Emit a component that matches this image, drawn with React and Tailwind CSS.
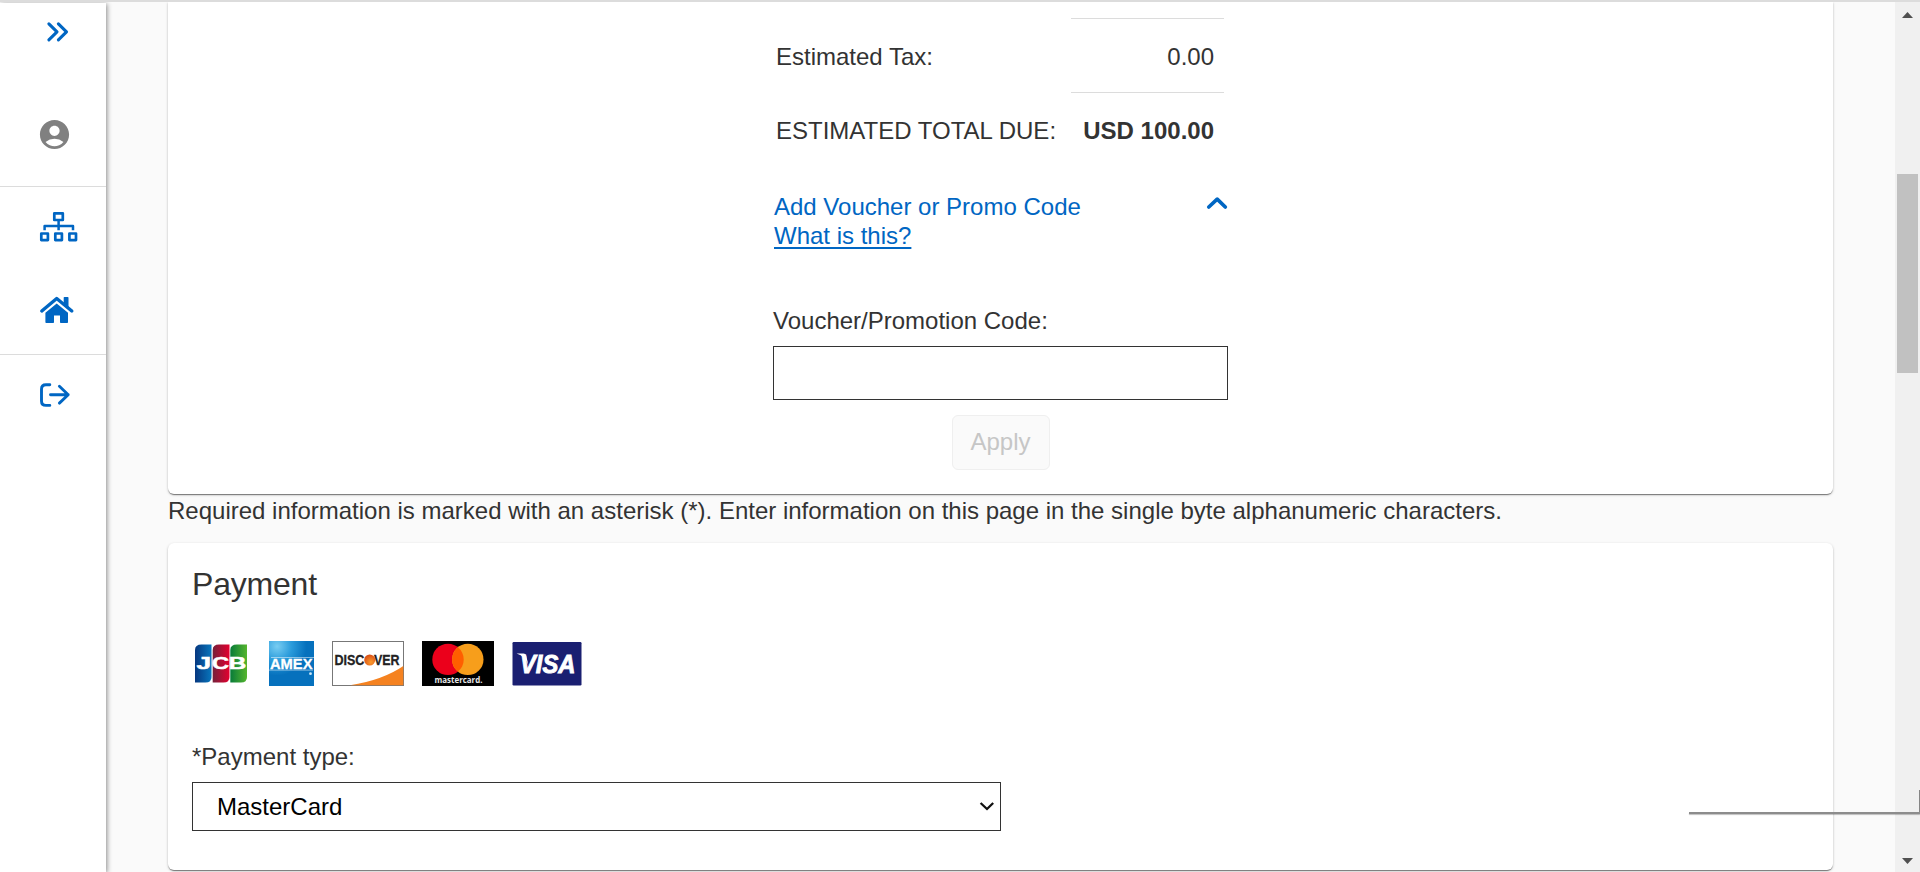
import React from "react";
import { MdAccountCircle } from "react-icons/md";

function Sidebar() {
  return (
    <nav className="mt-[3px] flex h-[869px] w-[106px] shrink-0 flex-col bg-white shadow-[1px_1px_5px_rgba(0,0,0,0.45)]">
      <div className="flex h-[184px] flex-col border-b border-[#dcdcdc]">
        <svg className="mt-[18px] ml-[46px] shrink-0" width="24" height="22" viewBox="0 0 24 22" fill="none" stroke="#0066c3" strokeWidth="3.1" strokeLinecap="round" strokeLinejoin="round">
          <path d="M2.9 2.9L11 10.9L2.9 18.8M12.4 2.9L20.5 10.9L12.4 18.8" />
        </svg>
        <MdAccountCircle className="mt-[74px] ml-[37px] size-[35px] shrink-0 text-[#808080]" />
      </div>
      <div className="flex h-[168px] flex-col border-b border-[#dcdcdc] pl-[39px]">
        <svg className="mt-[22px] shrink-0" width="40" height="34" viewBox="0 0 40 34" fill="none" stroke="#0066c3" strokeWidth="2.7" strokeLinejoin="round" strokeLinecap="round">
          <rect x="15.3" y="4.3" width="8.5" height="6.7" />
          <path d="M19.6 11.5V21.2M5.6 21.2V17H34V21.2" strokeWidth="2.5" strokeLinecap="butt" />
          <rect x="2.3" y="24.5" width="6.6" height="6.6" />
          <rect x="16.3" y="24.5" width="6.6" height="6.6" />
          <rect x="30.4" y="24.5" width="6.6" height="6.6" />
        </svg>
        <svg className="mt-[50px] shrink-0" width="38" height="32" viewBox="0 0 38 32" fill="#0066c3">
          <path d="M2.8 18L17.7 5.5L32.8 18" fill="none" stroke="#0066c3" strokeWidth="3.4" strokeLinecap="round" strokeLinejoin="round" />
          <path d="M24.7 4.7Q24.7 4 25.4 4H28.8Q29.5 4 29.5 4.7V15L24.7 11Z" />
          <path d="M17.7 10.5L29 19.7V29.2Q29 30 28.2 30H21.8Q21 30 21 29.2V22.5H15V29.2Q15 30 14.2 30H7.2Q6.4 30 6.4 29.2V19.7Z" />
        </svg>
      </div>
      <svg className="mt-[26px] ml-[39px] shrink-0" width="34" height="28" viewBox="0 0 34 28" fill="none" stroke="#0066c3" strokeWidth="2.9" strokeLinecap="round" strokeLinejoin="round">
        <path d="M10.8 3.7H7Q2.5 3.7 2.5 8.2V19.9Q2.5 24.4 7 24.4H10.8M11.5 13.7H29.2M20.4 5.3L29.2 13.7L20.4 22.1" />
      </svg>
    </nav>
  );
}

function CardLogos() {
  return (
    <div className="mt-[38px] flex h-[45px] items-start gap-[18px]">
      <svg width="59" height="45" viewBox="0 0 59 45" fontFamily="Liberation Sans, sans-serif">
        <defs>
          <linearGradient id="jb"><stop stopColor="#06377f" /><stop offset="1" stopColor="#0876bd" /></linearGradient>
          <linearGradient id="jr"><stop stopColor="#75203a" /><stop offset="1" stopColor="#e4002f" /></linearGradient>
          <linearGradient id="jg"><stop stopColor="#087b39" /><stop offset="1" stopColor="#55b52e" /></linearGradient>
        </defs>
        <path d="M9.5 3.5H19.5V36Q19.5 41.5 13.5 41.5H3V9Q3 3.5 9.5 3.5Z" fill="url(#jb)" />
        <path d="M27 3.5H37.5V36Q37.5 41.5 31.5 41.5H20.7V9Q20.7 3.5 27 3.5Z" fill="url(#jr)" />
        <path d="M45 3.5H55V36Q55 41.5 49 41.5H38.3V9Q38.3 3.5 45 3.5Z" fill="url(#jg)" />
        <g fill="#fff" stroke="#fff" strokeWidth=".5" fontSize="16" fontWeight="700">
          <text x="4.5" y="28.4" textLength="14.5" lengthAdjust="spacingAndGlyphs">J</text>
          <text x="20" y="28.4" textLength="17" lengthAdjust="spacingAndGlyphs">C</text>
          <text x="36.8" y="28.4" textLength="17.5" lengthAdjust="spacingAndGlyphs">B</text>
        </g>
      </svg>
      <svg width="45" height="45" viewBox="0 0 45 45" fontFamily="Liberation Sans, sans-serif">
        <defs>
          <radialGradient id="ax" cx="0.18" cy="0.12" r="0.65"><stop stopColor="#78cdf2" /><stop offset="0.5" stopColor="#2a9bdb" /><stop offset="1" stopColor="#0671bd" /></radialGradient>
        </defs>
        <rect width="45" height="45" fill="url(#ax)" />
        <rect x="2" y="16" width="43" height="1" fill="#fff" opacity=".5" />
        <rect x="0" y="28.6" width="44" height="1" fill="#fff" opacity=".5" />
        <text x="1" y="27.9" fill="#fff" stroke="#fff" strokeWidth=".3" fontSize="14.5" fontWeight="700" textLength="42.5" lengthAdjust="spacingAndGlyphs">AMEX</text>
        <circle cx="41.5" cy="32.7" r="1.4" fill="#cce7f8" />
      </svg>
      <svg width="72" height="45" viewBox="0 0 72 45" fontFamily="Liberation Sans, sans-serif">
        <defs>
          <radialGradient id="dc" cx="0.6" cy="0.7" r="0.7"><stop stopColor="#fb9b2c" /><stop offset="1" stopColor="#d84d16" /></radialGradient>
        </defs>
        <rect x=".5" y=".5" width="71" height="44" fill="#fff" stroke="#777" />
        <path d="M71.3 25Q51 39 18 44.3H71.3Z" fill="#f58220" />
        <text x="2.4" y="24.2" fill="#222" stroke="#222" strokeWidth=".3" fontSize="15.5" fontWeight="700" textLength="30" lengthAdjust="spacingAndGlyphs">DISC</text>
        <circle cx="37.7" cy="19" r="5.5" fill="url(#dc)" />
        <text x="42" y="24.2" fill="#222" stroke="#222" strokeWidth=".3" fontSize="15.5" fontWeight="700" textLength="25.6" lengthAdjust="spacingAndGlyphs">VER</text>
      </svg>
      <svg width="72" height="45" viewBox="0 0 72 45" fontFamily="Open Sans, sans-serif">
        <rect width="72" height="45" fill="#000" />
        <circle cx="26" cy="18.4" r="15.7" fill="#eb001b" />
        <circle cx="45.8" cy="18.4" r="15.7" fill="#f79e1b" />
        <path d="M35.9 6.2A15.7 15.7 0 0 1 35.9 30.6A15.7 15.7 0 0 1 35.9 6.2Z" fill="#ff5f00" />
        <text x="12.5" y="41.6" fill="#e8e8e8" fontSize="8.5" fontWeight="700" textLength="48" lengthAdjust="spacingAndGlyphs">mastercard.</text>
      </svg>
      <svg width="70" height="45" viewBox="0 0 70 45" fontFamily="Liberation Sans, sans-serif">
        <rect x=".5" y="1" width="69" height="43.5" rx="1.2" fill="#1a1f71" />
        <path d="M4.6 12.6H11.5Q13.6 12.6 14.2 14.7L16.4 24Q13.5 15.6 4.6 12.6Z" fill="#fff" />
        <text x="8" y="31.6" fill="#fff" stroke="#fff" strokeWidth=".9" fontSize="26" fontWeight="700" fontStyle="italic" textLength="55.5" lengthAdjust="spacingAndGlyphs">VISA</text>
      </svg>
    </div>
  );
}

function OrderSummary() {
  return (
    <section className="flex h-[492px] flex-col rounded-b-[6px] bg-white pl-[605px] shadow-[0_1px_3px_rgba(0,0,0,0.2),0_2px_1px_-1px_rgba(0,0,0,0.3),0_1px_1px_rgba(0,0,0,0.2)]">
      <div className="mt-4 grid w-[451px] grid-cols-[298px_153px]">
        <div className="h-[74px] pt-[25px] pl-[3px]">Estimated Tax:</div>
        <div className="border-t border-[#dcdcdc] pt-[24px] pr-[10px] text-right">0.00</div>
        <div className="h-[74px] pt-[25px] pl-[3px] whitespace-nowrap">ESTIMATED TOTAL DUE:</div>
        <div className="border-t border-[#dcdcdc] pt-[24px] pr-[10px] text-right font-bold whitespace-nowrap">USD 100.00</div>
      </div>
      <div className="mt-[26px] flex w-[455px] justify-between pl-[1px] leading-[29px] text-[#0066c3]">
        <div>
          <div>Add Voucher or Promo Code</div>
          <a className="underline decoration-2 underline-offset-[3px]">What is this?</a>
        </div>
        <svg className="mt-[3px]" width="22" height="16" viewBox="0 0 22 16" fill="none" stroke="#0066c3" strokeWidth="3.7" strokeLinecap="round" strokeLinejoin="round">
          <path d="M2.8 12L11.2 4.2L19.3 12" />
        </svg>
      </div>
      <label className="mt-[57px]">Voucher/Promotion Code:</label>
      <input className="mt-[11px] h-[54px] w-[455px] shrink-0 border border-[#333]" />
      <div className="mt-[15px] flex w-[455px] justify-center">
        <button className="h-[55px] w-[98px] rounded-[6px] border border-[#efefef] bg-[#fafafa] pb-[2px] text-[#c6c6c6]">Apply</button>
      </div>
    </section>
  );
}

function Payment() {
  return (
    <section className="mt-[19px] flex h-[327px] flex-col rounded-[6px] bg-white pl-6 shadow-[0_1px_3px_rgba(0,0,0,0.2),0_2px_1px_-1px_rgba(0,0,0,0.3),0_1px_1px_rgba(0,0,0,0.2)]">
      <h2 className="mt-[22px] text-[32px] leading-[38px] tracking-[-0.2px]">Payment</h2>
      <CardLogos />
      <label className="mt-[57px]">*Payment type:</label>
      <div className="mt-[11px] flex h-[49px] w-[809px] items-center justify-between border border-[#333] pr-[6px] pl-6 text-black">
        <span>MasterCard</span>
        <svg width="15" height="14" viewBox="0 0 15 14" fill="none" stroke="#111" strokeWidth="2.3">
          <path d="M1.6 3L8 9L14.2 3" />
        </svg>
      </div>
    </section>
  );
}

function Scrollbar() {
  return (
    <div className="mt-[2px] flex h-[870px] w-[25px] shrink-0 flex-col items-center bg-[#f0f0f0]">
      <svg className="mt-[10px]" width="11" height="6" viewBox="0 0 11 6"><path d="M0 6L5.5 0L11 6Z" fill="#505050" /></svg>
      <div className="mt-[156px] h-[199px] w-[21px] bg-[#c1c1c1]" />
      <svg className="mt-auto mb-[8px]" width="11" height="6" viewBox="0 0 11 6"><path d="M0 0H11L5.5 6Z" fill="#505050" /></svg>
    </div>
  );
}

export default function App() {
  return (
    <div className="relative h-[872px] w-[1920px] overflow-hidden bg-[#fafafa] font-['Liberation_Sans',Arial,sans-serif] text-[24px] leading-[28px] text-[#333]">
      <div className="flex h-[872px]">
        <Sidebar />
        <main className="flex flex-1 flex-col pt-[2px] pr-[62px] pl-[62px]">
          <OrderSummary />
          <p className="mt-[1px] whitespace-nowrap pt-[3px] leading-[26px]">
            Required information is marked with an asterisk (*). Enter information on this page in the single byte alphanumeric characters.
          </p>
          <Payment />
        </main>
        <Scrollbar />
      </div>
      <div className="absolute inset-x-0 top-0 h-[2px] bg-[#dcdcdc]" />
      <div className="absolute top-[812px] right-0 h-[2px] w-[231px] bg-[#8c8c8c] shadow-[0_1px_1px_rgba(0,0,0,0.25)]" />
      <div className="absolute top-[790px] right-0 h-[22px] w-px bg-[#858585]" />
    </div>
  );
}
